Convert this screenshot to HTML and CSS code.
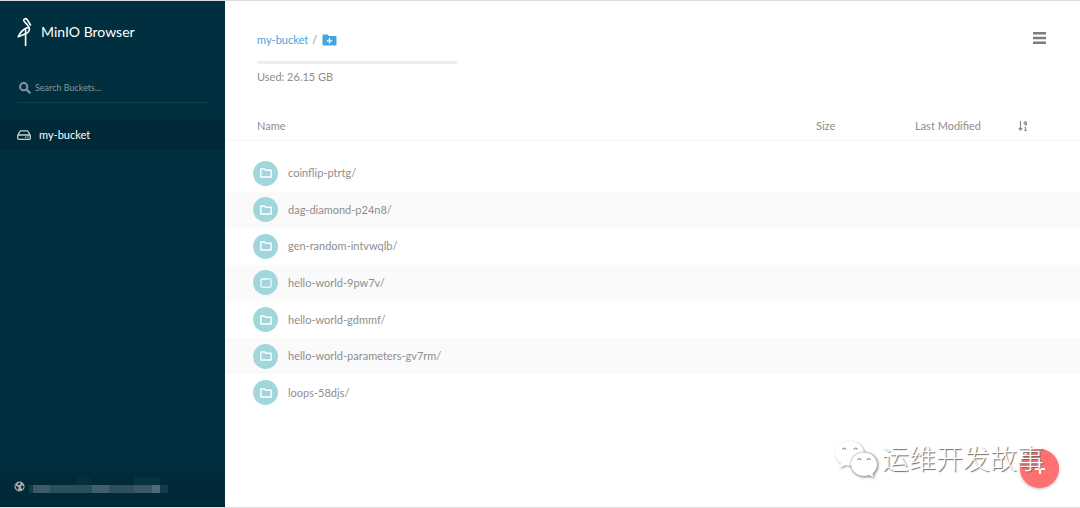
FILE: index.html
```html
<!DOCTYPE html>
<html lang="en">
<head>
<meta charset="utf-8">
<title>MinIO Browser</title>
<link rel="stylesheet" href="styles.css">
</head>
<body>
<svg class="defs" aria-hidden="true">
  <symbol id="folder" viewBox="0 0 12 10"><path d="M.8 1h3.700l1.300 1.300H11.200V9H.8z" fill="none" stroke="#fff" stroke-width="1.400" stroke-linejoin="round"/></symbol>
  <symbol id="file" viewBox="0 0 12 10"><rect x="1" y="0.700" width="10" height="8.600" rx="1.500" fill="none" stroke="#e8f7f9" stroke-width="1.400"/><path d="M2 1.500h5" stroke="#e8f7f9"/></symbol>
</svg>
<div class="app">
  <aside class="sidebar">
    <header class="brand">
      <svg class="brand-logo" viewBox="0 0 16 30" fill="none" stroke="#fff" stroke-linejoin="round" stroke-linecap="round"><path d="M13.500 8L10.200 2.800C9 1 6.800 1.500 6.700 3.300C6.700 4.600 8.200 5.600 10 7.500C12.700 10.300 13 12.200 11.700 14.300C10.900 15.600 9.800 16.200 8.600 16.700V28.500" stroke-width="1.600"/><path d="M10.800 10.500C6 12.300 3 15.500 1.200 19.800L8.600 16.800V12.500" stroke-width="1.600"/></svg>
      <h1>MinIO Browser</h1>
    </header>
    <label class="search">
      <svg viewBox="0 0 12 12" fill="none" stroke="#84979f"><circle cx="4.700" cy="4.700" r="3.600" stroke-width="2"/><path d="M7.500 7.500l3.300 3.300" stroke-width="2.200" stroke-linecap="round"/></svg>
      <input type="text" placeholder="Search Buckets..." aria-label="Search Buckets">
    </label>
    <nav>
      <a class="bucket" href="#">
        <svg viewBox="0 0 14 10" fill="none" stroke="#c6d1d5" stroke-width="1.300"><path d="M.8 5.300L3 1.300Q3.300.8 3.800.8H10.200Q10.700.8 11 1.300L13.200 5.300"/><rect x=".7" y="5" width="12.600" height="4.300" rx="1"/><path d="M8 7.200h1.300M10.300 7.200h1.300"/></svg>
        my-bucket
      </a>
    </nav>
    <footer class="host">
      <svg class="globe" viewBox="0 0 12 12"><circle cx="6" cy="6" r="5.500" fill="#aaa"/><path d="M5.800 1.500L7.300 2.500L6.200 4L4.600 4.500L3.800 3.200zM1 4.500L3.200 5.800L5 6.800L4.700 8.500L3.600 9.800L2.500 7.500zM7.500 5.500L9.800 5L10.600 6.500L9.200 9L8 8z" fill="#002a37"/></svg>
      <svg class="redacted" viewBox="0 0 140 16"><path d="M47 0h16v8H47z" fill="#032e3b"/><path d="M105 0h26v8h-26z" fill="#08323f"/><path d="M0 8h4v8H0zM131 8h8v8h-8z" fill="#123c4a"/><path d="M4 8h17v8H4z" fill="#3d5b66"/><path d="M21 8h42v8H21z" fill="#294f5d"/><path d="M63 8h17v8H63z" fill="#40606b"/><path d="M80 8h25v8H80z" fill="#2e505d"/><path d="M105 8h18v8h-18z" fill="#395864"/><path d="M123 8h8v8h-8z" fill="#4c6b75"/></svg>
    </footer>
  </aside>
  <main class="main">
    <header class="topbar">
      <div class="location">
        <div class="path"><a href="#">my-bucket</a><span>/</span>
          <button type="button" aria-label="Create path"><svg viewBox="0 0 15 12"><path d="M1.500.5H5.500L7 2H13.500Q14.500 2 14.500 3V10.500Q14.500 11.500 13.500 11.500H1.500Q.5 11.500.5 10.500V1.500Q.5.5 1.500.5z" fill="#46a5e0"/><path d="M7.500 4v5.600M4.700 6.800h5.600" stroke="#fff" stroke-width="1.300"/></svg></button>
        </div>
        <div class="usage-bar"></div>
        <div>Used: 26.15 GB</div>
      </div>
      <button class="menu" type="button" aria-label="Menu"><svg viewBox="0 0 13 12"><path d="M0 1.200h13M0 6h13M0 10.800h13" stroke="#7d7d7d" stroke-width="2.400"/></svg></button>
    </header>
    <table class="files">
      <thead><tr><th>Name</th><th>Size</th><th>Last Modified</th><th><svg class="sort" viewBox="0 0 10 10" fill="none" stroke="#8e8e8e" stroke-width="1.200"><path d="M2.500 0v9M.8 7l1.700 2L4.200 7"/><circle cx="7.300" cy="2" r="1.200"/><path d="M8.500 2v1.500L7 4.500M6.500 6.500h1V9.500M6.300 9.400h2.500"/></svg></th></tr></thead>
      <tbody>
        <tr><td><span class="badge"><svg><use href="#folder"/></svg></span><a href="#">coinflip-ptrtg/</a></td></tr>
        <tr><td><span class="badge"><svg><use href="#folder"/></svg></span><a href="#">dag-diamond-p24n8/</a></td></tr>
        <tr><td><span class="badge"><svg><use href="#folder"/></svg></span><a href="#">gen-random-intvwqlb/</a></td></tr>
        <tr><td><span class="badge"><svg><use href="#file"/></svg></span><a href="#">hello-world-9pw7v/</a></td></tr>
        <tr><td><span class="badge"><svg><use href="#folder"/></svg></span><a href="#">hello-world-gdmmf/</a></td></tr>
        <tr><td><span class="badge"><svg><use href="#folder"/></svg></span><a href="#">hello-world-parameters-gv7rm/</a></td></tr>
        <tr><td><span class="badge"><svg><use href="#folder"/></svg></span><a href="#">loops-58djs/</a></td></tr>
      </tbody>
    </table>
  </main>
  <button class="fab" type="button" aria-label="Add"><svg viewBox="0 0 12 12"><path d="M6 1v10M1 6h10" stroke="#fff" stroke-width="2"/></svg></button>
  <div class="watermark" lang="zh">
    <svg viewBox="0 0 44 38"><g fill="#fff"><path d="M15.500 1C7.200 1 1 6.500 1 13.300C1 17.400 3.200 20.900 6.800 23.200L5.500 28L11 25.300C21 27.500 30 22 30 13.300C30 6.500 23.800 1 15.500 1z"/><path class="bubble" d="M30 12.500C22.800 12.500 17 17.800 17 24.300C17 30.800 22.800 36 30 36C31.800 36 33.500 35.700 35 35.100L39.500 37.300L38.600 33.500C41.400 31.300 43 28 43 24.300C43 17.800 37.200 12.500 30 12.500z"/></g><g fill="none" stroke="#888" stroke-width="1.200"><path d="M8.500 9.500q1.800-3 3.500 0M20 9.500q1.800-3 3.500 0M23.500 20q1.800-3 3.500 0M33 20q1.800-3 3.500 0"/></g></svg>
    <span>运维开发故事</span>
  </div>
</div>
</body>
</html>
```
FILE: styles.css
```css
* { box-sizing: border-box; }
body { margin: 0; font-family: Lato, "Noto Sans CJK SC", sans-serif; font-size: 11px; line-height: 16px; color: #8e8e8e; background: #fff; }
h1 { margin: 0; font-size: 14px; font-weight: 400; line-height: 20px; }
a { color: inherit; text-decoration: none; }
button { padding: 0; border: 0; background: none; cursor: pointer; }
svg { display: block; flex: none; }
.defs { position: absolute; width: 0; height: 0; }
.app { position: relative; display: flex; min-height: 100vh; border-top: 1px solid #dcdcdc; border-bottom: 1px solid #dcdcdc; }
.sidebar { display: flex; flex-direction: column; width: 225px; flex: none; background: #00303f; color: #fff; }
.brand { display: flex; align-items: center; gap: 8px; padding: 16px 17px 0; }
.brand-logo { width: 16px; height: 30px; }
.search { display: flex; align-items: center; gap: 4px; height: 30px; margin: 26px 17px 17px; padding-left: 2px; border-bottom: 1px solid #123f4d; }
.search svg { width: 12px; height: 12px; }
.search input { flex: 1; min-width: 0; padding: 0; border: 0; outline: 0; background: none; color: #fff; font: inherit; font-size: 9px; }
.search input::placeholder { color: #84979f; opacity: 1; }
.bucket { display: flex; align-items: center; gap: 8px; height: 30px; padding: 0 17px; background: #002a37; }
.bucket svg { width: 14px; height: 10px; }
.host { display: flex; align-items: center; gap: 4px; height: 42px; margin-top: auto; padding: 0 14px; background: linear-gradient(#00303f, #002a37 12px); }
.globe { width: 11px; height: 11px; }
.redacted { width: 140px; height: 16px; margin-bottom: 2px; }
.main { flex: 1; min-width: 0; }
.topbar { display: flex; justify-content: space-between; align-items: flex-start; padding: 31px 34px 26px 32px; }
.location { width: 200px; }
.path { display: flex; align-items: center; gap: 4px; }
.path a { color: #46a5e0; }
.path button { margin-left: 1px; }
.path svg { width: 15px; height: 12px; }
.usage-bar { height: 3px; margin: 13px 0 5px; background: #eee; }
.menu svg { width: 13px; height: 12px; }
.files { display: block; }
.files thead, .files tbody { display: grid; }
.files tr { display: grid; grid-template-columns: 1fr 99px 103px 62px; align-items: center; padding-left: 32px; }
.files thead tr { height: 30px; border-bottom: 1px solid #f5f5f5; }
.files tbody { grid-auto-rows: 1fr; height: 256px; margin-top: 14px; }
.files tbody tr { padding-left: 28px; }
.files tbody tr:nth-child(even) { background: #fafafa; }
.files th { padding: 0; text-align: left; font-weight: 400; }
.files td { display: flex; align-items: center; gap: 10px; padding: 0; }
.badge { display: grid; place-items: center; width: 25px; height: 25px; border-radius: 50%; background: #a1d6dc; }
.badge svg { width: 12px; height: 10px; }
.sort { width: 10px; height: 10px; }
.fab { position: absolute; right: 21px; bottom: 19px; display: grid; place-items: center; width: 39px; height: 39px; border-radius: 50%; background: #ff7070; box-shadow: 0 1px 3px #bbb; }
.fab svg { width: 12px; height: 12px; }
.watermark { position: absolute; right: 36px; bottom: 28px; display: flex; align-items: center; gap: 4px; pointer-events: none; font-size: 27px; font-weight: 300; line-height: 40px; color: #fff; text-shadow: 1px 1px 1px #666; }
.watermark svg { width: 44px; height: 38px; filter: drop-shadow(1px 1px 1px #999); }
.bubble { filter: drop-shadow(0 0 1px #888); }
```
